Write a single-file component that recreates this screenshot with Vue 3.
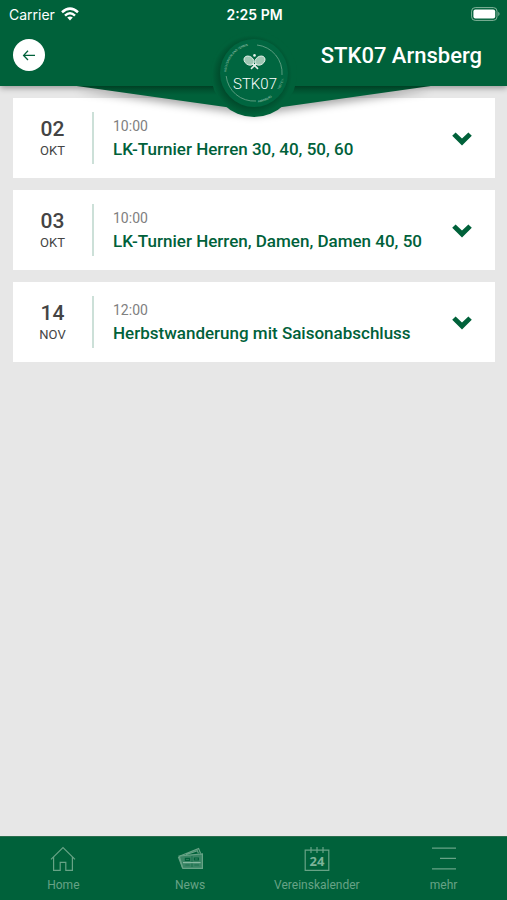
<script setup>
import { ref } from "vue";

const events = ref([
    { id: 1, day: "02", month: "OKT", time: "10:00", title: "LK-Turnier Herren 30, 40, 50, 60" },
    { id: 2, day: "03", month: "OKT", time: "10:00", title: "LK-Turnier Herren, Damen, Damen 40, 50" },
    { id: 3, day: "14", month: "NOV", time: "12:00", title: "Herbstwanderung mit Saisonabschluss" },
]);

const tabs = [
    { icon: "home", label: "Home" },
    { icon: "news", label: "News" },
    { icon: "calendar", label: "Vereinskalender" },
    { icon: "more", label: "mehr" },
];

const openId = ref(null);

function toggle(id) {
    openId.value = openId.value === id ? null : id;
}
</script>

<template>
    <div class="app">
        <header>
            <div class="status">
                <span class="carrier">
                    Carrier
                    <svg width="18" height="14" viewBox="0 0 18 14" fill="none" stroke="#fff" stroke-width="2.5">
                        <path d="M1 5.2Q9 -2 17 5.2" />
                        <path d="M4 8.6Q9 4 14 8.6" />
                        <path d="M6.2 10.6Q9 8.2 11.8 10.6L9 13.6Z" fill="#fff" stroke="none" />
                    </svg>
                </span>
                <span class="clock">2:25 PM</span>
                <span class="battery">
                    <svg width="30" height="14" viewBox="0 0 30 14">
                        <rect x="1.6" y="0.6" width="25.4" height="12.8" rx="3.6" fill="none" stroke="#83b49b" />
                        <rect x="3.4" y="2.4" width="21.8" height="9.2" rx="2" fill="#fff" />
                        <path d="M28.3 4.8Q30.8 7 28.3 9.2Z" fill="#83b49b" />
                    </svg>
                </span>
            </div>
            <div class="bar">
                <button class="back" aria-label="Zurück">
                    <svg width="14" height="12" viewBox="0 0 14 12" fill="none" stroke="#00613a" stroke-width="1.3">
                        <path d="M13 6.4H2M6 1.8L1.6 6.4L6 11" />
                    </svg>
                </button>
                <h1>STK07 Arnsberg</h1>
            </div>
            <svg class="flap" viewBox="0 0 352 50" preserveAspectRatio="none">
                <defs>
                    <linearGradient id="fold" x1="0" y1="0" x2="0" y2="1">
                        <stop offset="0" stop-color="#004024" />
                        <stop offset="0.16" stop-color="#005230" />
                        <stop offset="0.36" stop-color="#00613a" />
                    </linearGradient>
                </defs>
                <path d="M0 0H352L176 25Z" fill="url(#fold)" />
            </svg>
            <svg class="emblem" width="96" height="96" viewBox="0 0 96 96">
                <defs>
                    <path id="arcLeft" d="M20.4 46A28 28 0 0 1 49 19" />
                    <path id="arcBottom" d="M52 76.6A30 30 0 0 0 70 67" />
                    <path id="arcRight" d="M73 64A30 30 0 0 0 78 50" />
                    <radialGradient id="rim">
                        <stop offset="0.78" stop-color="#004a2b" />
                        <stop offset="1" stop-color="#00613a" />
                    </radialGradient>
                </defs>
                <circle cx="48" cy="48" r="43" fill="#00613a" />
                <circle cx="46" cy="49" r="40" fill="url(#rim)" />
                <circle cx="48" cy="47" r="34" fill="#006640" />
                <g fill="none" stroke="#72a98f" stroke-width="0.8">
                    <path d="M51 19A28 28 0 0 1 76 49" />
                    <path d="M20.2 50A28 28 0 0 0 50 75" />
                </g>
                <g class="ring-text">
                    <text><textPath href="#arcLeft">HOCHSAUERLAND TENNIS</textPath></text>
                    <text><textPath href="#arcBottom">ARNSBERG</textPath></text>
                    <text><textPath href="#arcRight">1907 E.V.</textPath></text>
                </g>
                <g stroke="#e6f1eb" fill="#9fc7b4">
                    <ellipse cx="43" cy="34.6" rx="5.4" ry="4.1" transform="rotate(35 43 34.6)" stroke-width="0.9" />
                    <ellipse cx="54" cy="34.6" rx="5.4" ry="4.1" transform="rotate(-35 54 34.6)" stroke-width="0.9" />
                    <path d="M46.6 37.6L52 42.8M50.4 37.6L45 42.8" stroke-width="1.6" />
                    <circle cx="48.5" cy="29.4" r="1.3" fill="#e6f1eb" stroke="none" />
                </g>
                <text class="emblem-name" x="49" y="63" text-anchor="middle">STK07</text>
            </svg>
        </header>

        <main>
            <article v-for="event in events" :key="event.id">
                <div class="date">
                    <span class="day">{{ event.day }}</span>
                    <span class="month">{{ event.month }}</span>
                </div>
                <div class="info">
                    <time>{{ event.time }}</time>
                    <h2>{{ event.title }}</h2>
                </div>
                <button
                    class="expand"
                    :class="{ open: openId === event.id }"
                    :aria-expanded="openId === event.id"
                    :aria-label="event.title"
                    @click="toggle(event.id)"
                >
                    <svg width="20" height="14" viewBox="0 0 20 14">
                        <path d="M3.6 0.6L10 6.4L16.4 0.6L19.8 3.8L10 13.6L0.2 3.8Z" fill="#00613a" />
                    </svg>
                </button>
            </article>
        </main>

        <nav>
            <a v-for="tab in tabs" :key="tab.icon" href="#">
                <svg width="26" height="26" viewBox="0 0 26 26" fill="none" stroke="#67a386" stroke-width="1.2">
                    <g v-if="tab.icon === 'home'">
                        <path d="M1 13.4L13 1.6L25 13.4" />
                        <path d="M3.6 11V24.4H10.2V16.4H15.8V24.4H22.4V11" />
                    </g>
                    <g v-else-if="tab.icon === 'news'">
                        <path d="M3 10L21.6 2.6L23.6 7.4M9 8.8L20.4 4.8L21.4 7.4" />
                        <path d="M1.4 10.8L5.4 21.6" />
                        <path d="M2.2 10L25.4 7.8V22.4H5.8Z" fill="#67a386" fill-opacity="0.55" />
                        <path d="M8.4 12.4H12.6V14.4H8.4ZM17.4 12H21.4V14H17.4Z" stroke="#00613a" />
                        <path d="M8.4 19H12.6M17.4 19H22M15 10V21" stroke="#1d7350" />
                        <path d="M6 16.6H23.6" stroke="#87b9a1" />
                    </g>
                    <g v-else-if="tab.icon === 'calendar'">
                        <path d="M1.2 4.2H24.8V24.4H1.2Z" />
                        <path d="M7 1V7M13 1V7M19 1V7" />
                        <text class="cal-day" x="13" y="20" text-anchor="middle">24</text>
                    </g>
                    <g v-else>
                        <path d="M1 2.2H25M9 12.4H25M1 22.8H25" />
                    </g>
                </svg>
                <span>{{ tab.label }}</span>
            </a>
        </nav>
    </div>
</template>

<style>
body {
    margin: 0;
    background-color: #e7e7e7;
}
</style>

<style scoped>
* {
    box-sizing: border-box;
}

.app {
    min-height: 100vh;
    display: flex;
    flex-direction: column;
    font-family: Roboto, sans-serif;
    background-color: #e7e7e7;
}

header {
    position: relative;
    z-index: 1;
    color: white;
    background-color: #00613a;
    box-shadow: 0 2px 6px rgba(0, 0, 0, 0.35);
}

.status {
    display: grid;
    grid-template-columns: 1fr auto 1fr;
    align-items: center;
    height: 28px;
    padding: 0 7px 0 9px;
    font-family: Inter, sans-serif;
    font-size: 14px;
}

.carrier {
    display: flex;
    align-items: center;
    gap: 6px;
}

.clock {
    font-weight: 600;
}

.battery {
    display: flex;
    justify-content: flex-end;
}

.bar {
    display: flex;
    align-items: center;
    justify-content: space-between;
    height: 58px;
    padding: 0 25px 4px 13px;
}

.back {
    display: flex;
    align-items: center;
    justify-content: center;
    width: 32px;
    height: 32px;
    padding: 0;
    border: none;
    border-radius: 50%;
    background-color: white;
}

h1 {
    margin: 0;
    font-size: 22px;
    font-weight: 500;
}

/* folded ribbon and club badge hang over the first card */
.flap {
    position: absolute;
    top: 100%;
    left: 50%;
    width: 70%;
    height: 50px;
    transform: translateX(-50%);
    filter: drop-shadow(0 4px 4px rgba(0, 0, 0, 0.35));
    clip-path: inset(0 -20px 0 -20px);
}

.emblem {
    position: absolute;
    bottom: -36px;
    left: 50%;
    transform: translateX(-50%);
}

.ring-text {
    font-size: 3px;
    fill: #a3c9b7;
}

.emblem-name {
    font-size: 15px;
    font-weight: 300;
    fill: white;
}

main {
    flex: 1;
    display: flex;
    flex-direction: column;
    gap: 12px;
    padding: 12px 12px 12px 13px;
}

article {
    display: flex;
    align-items: center;
    height: 80px;
    padding-right: 23px;
    background-color: white;
}

.date {
    display: flex;
    flex-direction: column;
    align-items: center;
    justify-content: center;
    width: 81px;
    height: 52px;
    padding-top: 2px;
    border-right: 2px solid #cce0d8;
    color: #444;
}

.day {
    font-size: 21px;
    font-weight: 500;
    line-height: 24px;
}

.month {
    font-size: 13px;
    line-height: 20px;
}

.info {
    flex: 1;
    padding: 2px 0 0 19px;
}

time {
    display: block;
    color: #808080;
    font-size: 14px;
    line-height: 20px;
}

h2 {
    margin: 0;
    color: #00613a;
    font-size: 17px;
    font-weight: 500;
    line-height: 26px;
}

.expand {
    display: flex;
    padding: 2px 0 0;
    border: none;
    background: none;
}

.open {
    transform: rotate(180deg);
}

nav {
    display: flex;
    height: 64px;
    border-top: 1px solid #2b6e4e;
    background-color: #00613a;
}

nav a {
    flex: 1;
    display: flex;
    flex-direction: column;
    align-items: center;
    gap: 4px;
    padding-top: 9px;
    color: #67a386;
    font-size: 12px;
    line-height: 18px;
    text-decoration: none;
}

.cal-day {
    font-family: "Open Sans", sans-serif;
    font-size: 13px;
    font-weight: 700;
    fill: #7db398;
    stroke: none;
}
</style>
